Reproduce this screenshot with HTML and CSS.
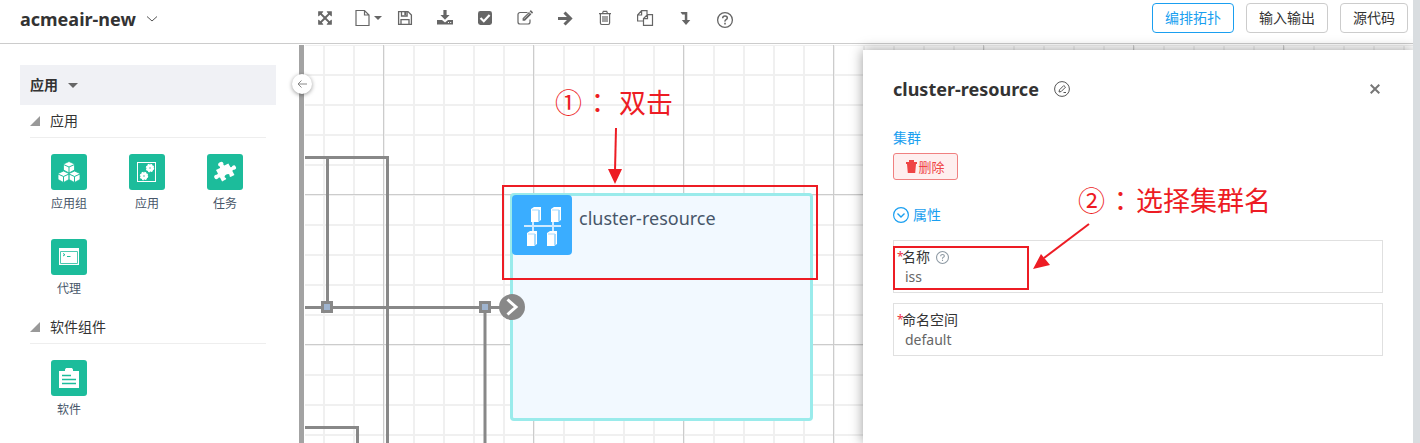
FILE: index.html
```html
<!DOCTYPE html>
<html lang="zh-CN">
<head>
<meta charset="utf-8">
<title>acmeair-new</title>
<link rel="stylesheet" href="styles.css">
</head>
<body>
<div class="app">
  <header class="topbar">
    <button class="project" type="button">acmeair-new
      <svg width="12" height="8" viewBox="0 0 12 8" fill="none" stroke="#555"><path d="M1 1.500l5 4.500 5-4.500"/></svg>
    </button>
    <nav class="tools" aria-label="工具">
      <button type="button" aria-label="适应画布"><svg width="16" height="16" viewBox="0 0 1792 1792"><path d="M1411 541l-355 355 355 355 144-144q29-31 70-14 39 17 39 59v448q0 26-19 45t-45 19h-448q-42 0-59-40-17-39 14-69l144-144-355-355-355 355 144 144q31 30 14 69-17 40-59 40H192q-26 0-45-19t-19-45v-448q0-42 40-59 39-17 69 14l144 144 355-355-355-355-144 144q-30 31-69 14-40-17-40-59V192q0-26 19-45t45-19h448q42 0 59 40 17 39-14 69L541 381l355 355 355-355-144-144q-31-30-14-69 17-40 59-40h448q26 0 45 19t19 45v448q0 42-39 59-41 17-70-14z"/></svg></button>
      <button type="button" class="split" aria-label="新建"><svg width="16" height="18" viewBox="0 0 16 18" fill="none" stroke="#666" stroke-width="1.200"><path d="M1 1.500h8.500l4.500 4.500v10.500H1zM9.500 1.500V6H14"/></svg><svg width="8" height="4" viewBox="0 0 8 4"><path d="M0 0h8L4 4z"/></svg></button>
      <button type="button" aria-label="保存"><svg width="16" height="16" viewBox="0 0 16 16" fill="none" stroke="#666" stroke-width="1.300"><path d="M1.600 1.600h9.400l3.400 3.400v9.400H1.600zM4 14V9.600h8V14M4.500 2v4h5.600V2"/><path fill="#666" stroke="none" d="M7.300 2h2v3.200h-2z"/></svg></button>
      <button type="button" aria-label="下载"><svg width="16" height="16" viewBox="0 0 16 16"><path d="M6.400 0h3.200v5h3L8 9.700 3.400 5h3z"/><path d="M0 10h5l3 2.600 3-2.600h5v4.500H0zm11 2v1h1v-1zm2.200 0v1h1v-1z" fill-rule="evenodd"/></svg></button>
      <button type="button" aria-label="校验"><svg width="16" height="16" viewBox="0 0 16 16"><rect x="1" y="1" width="14" height="14" rx="2.400"/><path d="M3.500 8l3.300 3.200L12.600 5" fill="none" stroke="#fff" stroke-width="2.200"/></svg></button>
      <button type="button" aria-label="编辑"><svg width="16" height="16" viewBox="0 0 16 16"><path d="M10.500 2.500H3A2 2 0 0 0 1 4.500v7.500a2 2 0 0 0 2 2h8a2 2 0 0 0 2-2V9.500" fill="none" stroke="#666" stroke-width="1.200"/><path d="M5.600 8.300L12 1.900l2.400 2.400L8 10.700H5.600zM12.600 1.300l.7-.7q.5-.5 1 0l1.400 1.400q.5.500 0 1l-.7.700z"/><path d="M7 8.800L12.300 3.500" stroke="#fff" stroke-width=".6"/></svg></button>
      <button type="button" aria-label="前进"><svg width="16" height="16" viewBox="0 0 16 16" fill="none" stroke="#666" stroke-width="3"><path d="M1 8.500h12M7.500 2.500l6 6-6 6"/></svg></button>
      <button type="button" aria-label="删除"><svg width="16" height="16" viewBox="0 0 16 16" fill="none" stroke="#666" stroke-width="1.200"><path d="M2 3.600h12M3.400 3.600v9.500q0 1.400 1.200 1.400h6.800q1.200 0 1.200-1.400V3.600M5.500 3.400l.8-2h3.400l.8 2M6 6v6M8 6v6M10 6v6"/></svg></button>
      <button type="button" aria-label="复制"><svg width="18" height="18" viewBox="0 0 18 18" fill="none" stroke="#666" stroke-width="1.200"><path d="M7.500 12H1.600V6l4-4.400H11v4M5.600 1.600V6h-4M7.500 16.400V9.600l4-4h5v10.800zM11.500 5.600v4h-4"/></svg></button>
      <button type="button" aria-label="向下"><svg width="16" height="16" viewBox="0 0 16 16"><path d="M3.500 2h6.800v8h3L9 15 4.800 10h3V4.500h-2.600z"/></svg></button>
      <button type="button" aria-label="帮助" class="help"><svg width="18" height="18" viewBox="0 0 18 18" fill="none" stroke="#666"><circle cx="9" cy="9" r="7.400" stroke-width="1.300"/><path d="M6.700 7.200q0-2.200 2.300-2.200t2.300 2q0 1-1.200 1.700T9 10.600" stroke-width="1.500"/><path d="M9 11.800v1.600" stroke-width="1.600"/></svg></button>
    </nav>
    <div class="views">
      <button class="view active" type="button">编排拓扑</button>
      <button class="view" type="button">输入输出</button>
      <button class="view" type="button">源代码</button>
    </div>
  </header>

  <div class="workspace">
    <aside class="sidebar">
      <button class="category" type="button">应用
        <svg width="10" height="5" viewBox="0 0 10 5"><path d="M0 0h10L5 5z" fill="#666"/></svg>
      </button>
      <section class="group">
        <h2>应用</h2>
        <ul class="palette">
          <li><span class="tile"><svg width="24" height="24" viewBox="0 0 24 24"><g fill="#fff" stroke="#1cbc9b" stroke-width=".8"><path d="M12 1.500l5.500 2.500v6L12 13 6.500 10V4z"/><path d="M6.500 11l5.500 2.500v6L6.500 22.500 1 19.500v-6zM17.500 11l5.500 2.500v6l-5.500 3-5.500-3v-6z"/></g><g fill="none" stroke="#1cbc9b"><path d="M6.500 4.500L12 7l5.500-2.500M12 7v6M1 14l5.500 2.500L12 14l5.500 2.500L23 14M6.500 16.500v6M17.500 16.500v6"/></g></svg></span>应用组</li>
          <li><span class="tile"><svg width="20" height="20" viewBox="0 0 20 20" fill="none" stroke="#fff"><rect x=".5" y=".5" width="18" height="19"/><g fill="#fff" stroke-width="1.400" stroke-dasharray="1.700 1.050"><circle cx="13" cy="6" r="3.500"/><circle cx="7" cy="14" r="3.500"/></g><g stroke="none" fill="#fff"><circle cx="13" cy="6" r="3.200"/><circle cx="7" cy="14" r="3.200"/></g><g stroke="none" fill="#8edccb"><circle cx="13" cy="6" r="1"/><circle cx="7" cy="14" r="1"/></g></svg></span>应用</li>
          <li><span class="tile"><svg width="24" height="24" viewBox="0 0 24 24" fill="#fff"><g transform="rotate(-28 12 12)"><path d="M5 6h4.500q1-1-.2-2.300Q8.800 1 12 1t2.700 2.700Q13.500 5 14.500 6H19v4.200q1 1 2.300 0Q24 9.500 24 12.300T21.300 14.500Q20 13.500 19 14.500V19h-4.500q-1-1 .2-2.200 0-2-2.700-2t-2.700 2Q10.500 18 9.500 19H5v-4.500q-1-1-2.300 0Q0 15 0 12.300t2.700-2.200q1.300 1.100 2.300 0z"/></g></svg></span>任务</li>
          <li><span class="tile"><svg width="20" height="18" viewBox="0 0 20 18"><path d="M0 0h20v17H0z" fill="#fff"/><path d="M1.500 3.500h17v12h-17z" fill="none" stroke="#4cc9b0"/><path d="M4 5.500l2 1.200-2 1.300M8 8.500h3.500" fill="none" stroke="#1cbc9b"/></svg></span>代理</li>
        </ul>
      </section>
      <section class="group">
        <h2>软件组件</h2>
        <ul class="palette">
          <li><span class="tile"><svg width="20" height="20" viewBox="0 0 20 20"><path d="M0 3h6V1.500L7 0h6l1 1.500V3h6v17H0z" fill="#fff"/><path d="M3 7.500h9M3 11.500h14M3 15.500h14" stroke="#1cbc9b" stroke-width="1.400"/></svg></span>软件</li>
        </ul>
      </section>
      <button class="collapse" type="button" aria-label="收起"><svg width="10" height="10" viewBox="0 0 10 10" fill="none" stroke="#888"><path d="M10 5H1M4.500 1.500L1 5l3.500 3.500"/></svg></button>
    </aside>

    <main class="canvas">
      <svg class="links" fill="none" stroke="#888" stroke-width="3">
        <path d="M0 112.500h82.500V1200M22.500 112.500v150M0 262.500h206M180 262.500V1200M0 382.500h52.500V1200"/>
        <g fill="#9fb4cf"><path d="M17.500 257.500h9v9h-9zM175.500 257.500h9v9h-9z"/></g>
      </svg>
      <div class="node">
        <span class="node-icon"><svg width="60" height="60" viewBox="0 0 60 60"><path d="M12 31h37M21 25v14M41 25v14" stroke="#cfeaff" stroke-width="2"/><g fill="#fff"><path d="M19 14l3-2h7v13l-3 2h-7zM39 14l3-2h7v13l-3 2h-7zM15 38l3-2h7v13l-3 2h-7zM35 38l3-2h7v13l-3 2h-7z"/></g><path d="M27 15v11M47 15v11M23 39v11M43 39v11" stroke="#a7dbff" stroke-width="2"/><path d="M20 15h7M40 15h7M16 39h7M36 39h7" stroke="#a7dbff"/></svg></span>
        <span class="node-name">cluster-resource</span>
      </div>
      <svg class="port" width="26" height="26" viewBox="0 0 26 26"><circle cx="13" cy="13" r="13" fill="#888"/><path d="M8.500 5.500l8.500 7.500-8.500 7.500" fill="none" stroke="#fff" stroke-width="3"/></svg>

      <aside class="panel">
        <div class="panel-head">
          <h1>cluster-resource</h1>
          <button class="icon-btn" type="button" aria-label="重命名"><svg width="16" height="16" viewBox="0 0 16 16" fill="none" stroke="#555"><circle cx="8" cy="8" r="7.400"/><path d="M5 11l.5-2.200L9.800 4.500l1.700 1.700-4.300 4.300zM9.500 11.500h2.500"/></svg></button>
          <button class="icon-btn close" type="button" aria-label="关闭"><svg width="10" height="10" viewBox="0 0 10 10" stroke="#777" stroke-width="2"><path d="M.7.700l8.600 8.600M9.300.7L.7 9.300"/></svg></button>
        </div>
        <p class="kind">集群</p>
        <button class="delete" type="button"><svg width="11" height="13" viewBox="0 0 11 13" fill="#ef4444"><path d="M0 2h3V0h5v2h3v2H0zM1 4h9l-.8 9H1.800z"/></svg>删除</button>
        <h2 class="section"><svg width="16" height="16" viewBox="0 0 16 16" fill="none" stroke="#1a9ff0"><circle cx="8" cy="8" r="7.400" stroke-width="1.200"/><path d="M4.500 6.500L8 10l3.500-3.500" stroke-width="1.400"/></svg>属性</h2>
        <div class="field">
          <label for="name"><i>*</i>名称 <svg width="13" height="13" viewBox="0 0 12 12" fill="none" stroke="#8d99a3"><circle cx="6" cy="6" r="5.500"/><path d="M4.300 4.800q0-1.600 1.700-1.600t1.700 1.400q0 .8-.9 1.200T6 7.200M6 8v1.200"/></svg></label>
          <input id="name" type="text" value="iss">
        </div>
        <div class="field">
          <label for="ns"><i>*</i>命名空间</label>
          <input id="ns" type="text" value="default">
        </div>
        <div class="mark mark-name"></div>
        <div class="note note-two"><span>②</span><span class="colon">：</span><span>选择集群名</span></div>
        <svg class="arrow arrow-two" width="60" height="50" viewBox="0 0 60 50"><path d="M58 2L13 36" stroke="#ed1c24" stroke-width="2"/><path d="M2 47l8-15 9 11z" fill="#ed1c24"/></svg>
      </aside>

      <div class="mark mark-node"></div>
      <div class="note note-one"><span>①</span><span class="colon">：</span><span>双击</span></div>
      <svg class="arrow arrow-one" width="16" height="58" viewBox="0 0 16 58"><path d="M9 1L8 44" stroke="#ed1c24" stroke-width="2"/><path d="M1 42h14L8 57z" fill="#ed1c24"/></svg>
    </main>
  </div>
</div>
</body>
</html>
```
FILE: styles.css
```css
* { box-sizing: border-box; }

body {
  margin: 0;
  background: #d9dde0;
  color: #333;
  font: 14px/20px "Noto Sans", "Noto Sans CJK SC", sans-serif;
}

button, input { font: inherit; color: inherit; }
button { padding: 0; border: 0; background: none; }
h1, h2, p, ul { margin: 0; padding: 0; }

.app {
  display: flex;
  flex-direction: column;
  height: 100vh;
  margin-right: 7px;
  background: #fff;
  overflow: hidden;
}

.topbar {
  display: flex;
  flex: none;
  height: 44px;
  margin-bottom: 1px;
  border-bottom: 1px solid #ccc;
}
.project {
  display: flex;
  align-items: center;
  gap: 10px;
  width: 305px;
  height: 37px;
  padding-left: 20px;
  font-size: 18px;
  font-weight: 700;
}
.tools { display: flex; height: 36px; }
.tools button {
  display: flex;
  align-items: center;
  justify-content: center;
  gap: 3px;
  width: 40px;
}
.tools .split { padding-left: 7px; }
.tools svg { fill: #666; }
.tools svg[fill="none"] { fill: none; }
.tools .help { padding-top: 4px; }

.views {
  display: flex;
  gap: 12px;
  margin: 3px 5px 0 auto;
}
.view {
  height: 30px;
  padding: 0 12px;
  border: 1px solid #ccc;
  border-radius: 4px;
}
.view.active { border-color: #1a9ff0; color: #1a9ff0; }

.workspace { display: flex; flex: 1; min-height: 0; }

.sidebar {
  position: relative;
  z-index: 1;
  flex: none;
  width: 304px;
  padding: 20px 23px 0 20px;
  border-right: 5px solid #a3a3a3;
}
.category {
  display: flex;
  align-items: center;
  gap: 10px;
  width: 100%;
  height: 40px;
  padding-left: 10px;
  background: #f0f1f5;
  font-weight: 700;
}
.group { padding: 0 10px; }
.group h2 {
  display: flex;
  align-items: center;
  gap: 10px;
  height: 33px;
  border-bottom: 1px solid #eee;
  font-size: 14px;
  font-weight: 400;
}
.group h2::before {
  content: "";
  border-left: 10px solid transparent;
  border-bottom: 10px solid #999;
}
.palette {
  display: grid;
  grid-template-columns: repeat(3, 78px);
  padding-top: 16px;
  list-style: none;
}
.palette li {
  display: flex;
  flex-direction: column;
  align-items: center;
  gap: 4px;
  height: 85px;
  color: #475669;
  font-size: 12px;
}
.group + .group { margin-top: -13px; }
.tile {
  display: flex;
  align-items: center;
  justify-content: center;
  width: 36px;
  height: 36px;
  border-radius: 3px;
  background: #1cbc9b;
}
.collapse {
  position: absolute;
  top: 29px;
  right: -13px;
  display: flex;
  align-items: center;
  justify-content: center;
  width: 20px;
  height: 20px;
  border-radius: 50%;
  background: #fff;
  box-shadow: 0 1px 4px #0006;
}

.canvas {
  position: relative;
  flex: 1;
  margin-left: 1px;
  background:
    linear-gradient(90deg, #ccc 1px, transparent 1px) 78px 0 / 150px 150px,
    linear-gradient(#ccc 1px, transparent 1px) 0 149px / 150px 150px,
    linear-gradient(90deg, #f0f0f0 2px, transparent 2px) 18px 0 / 30px 30px,
    linear-gradient(#f0f0f0 2px, transparent 2px) 0 29px / 30px 30px;
}
.links { position: absolute; inset: 0; width: 100%; height: 100%; }

.node {
  position: absolute;
  left: 205px;
  top: 148px;
  display: flex;
  gap: 8px;
  width: 303px;
  height: 228px;
  border: 3px solid #9aebeb;
  border-radius: 4px;
  background: #f2f9ff;
}
.node-icon {
  width: 60px;
  height: 60px;
  margin: -1px;
  border-radius: 4px;
  background: #3aadff;
}
.node-name {
  padding-top: 8px;
  color: #475669;
  font-size: 18px;
  line-height: 28px;
}
.port { position: absolute; left: 194px; top: 249px; }

.panel {
  position: absolute;
  top: 5px;
  right: 0;
  bottom: 0;
  width: 550px;
  padding: 24px 30px;
  background: #fff;
  box-shadow: 0 0 12px #0006;
}
.panel-head { display: flex; align-items: center; height: 30px; gap: 15px; }
.panel-head h1 { font-size: 18px; line-height: 28px; }
.icon-btn { display: flex; }
.close { margin: 0 3px 0 auto; }
.kind { margin-top: 24px; color: #1a9ff0; }
.delete {
  display: flex;
  align-items: center;
  justify-content: center;
  gap: 1px;
  width: 65px;
  height: 27px;
  margin-top: 5px;
  border: 1px solid #f08080;
  border-radius: 3px;
  background: #feefef;
  color: #ef4444;
  font-size: 13px;
}
.section {
  display: flex;
  align-items: center;
  gap: 4px;
  margin: 25px 0 15px;
  color: #1a9ff0;
  font-size: 14px;
  font-weight: 400;
}
.field {
  height: 53px;
  margin-bottom: 10px;
  padding: 6px 3px;
  border: 1px solid #e0e0e0;
}
.field label { display: flex; align-items: center; height: 20px; }
.field label i { width: 5px; color: #ed3040; font-size: 12px; font-style: normal; }
.field label svg { margin-left: 6px; }
.field input {
  display: block;
  width: 100%;
  height: 20px;
  padding: 0 8px;
  border: 0;
  outline: 0;
  background: none;
  color: #666;
}

.mark { position: absolute; border: 2px solid #ed1c24; }
.mark-node { left: 197px; top: 140px; width: 316px; height: 95px; }
.mark-name { left: 30px; top: 196px; width: 136px; height: 44px; }
.note {
  position: absolute;
  display: flex;
  gap: 2px;
  color: #ed1c24;
  font: 27px/36px "Noto Sans CJK SC", sans-serif;
  white-space: nowrap;
}
.note-one { left: 250px; top: 39px; }
.note-one .colon { margin-right: 6px; }
.note-two { left: 215px; top: 132px; }
.colon { font-family: "Noto Sans CJK TC", sans-serif; }
.arrow { position: absolute; }
.arrow-one { left: 302px; top: 82px; }
.arrow-two { left: 168px; top: 172px; }
```
